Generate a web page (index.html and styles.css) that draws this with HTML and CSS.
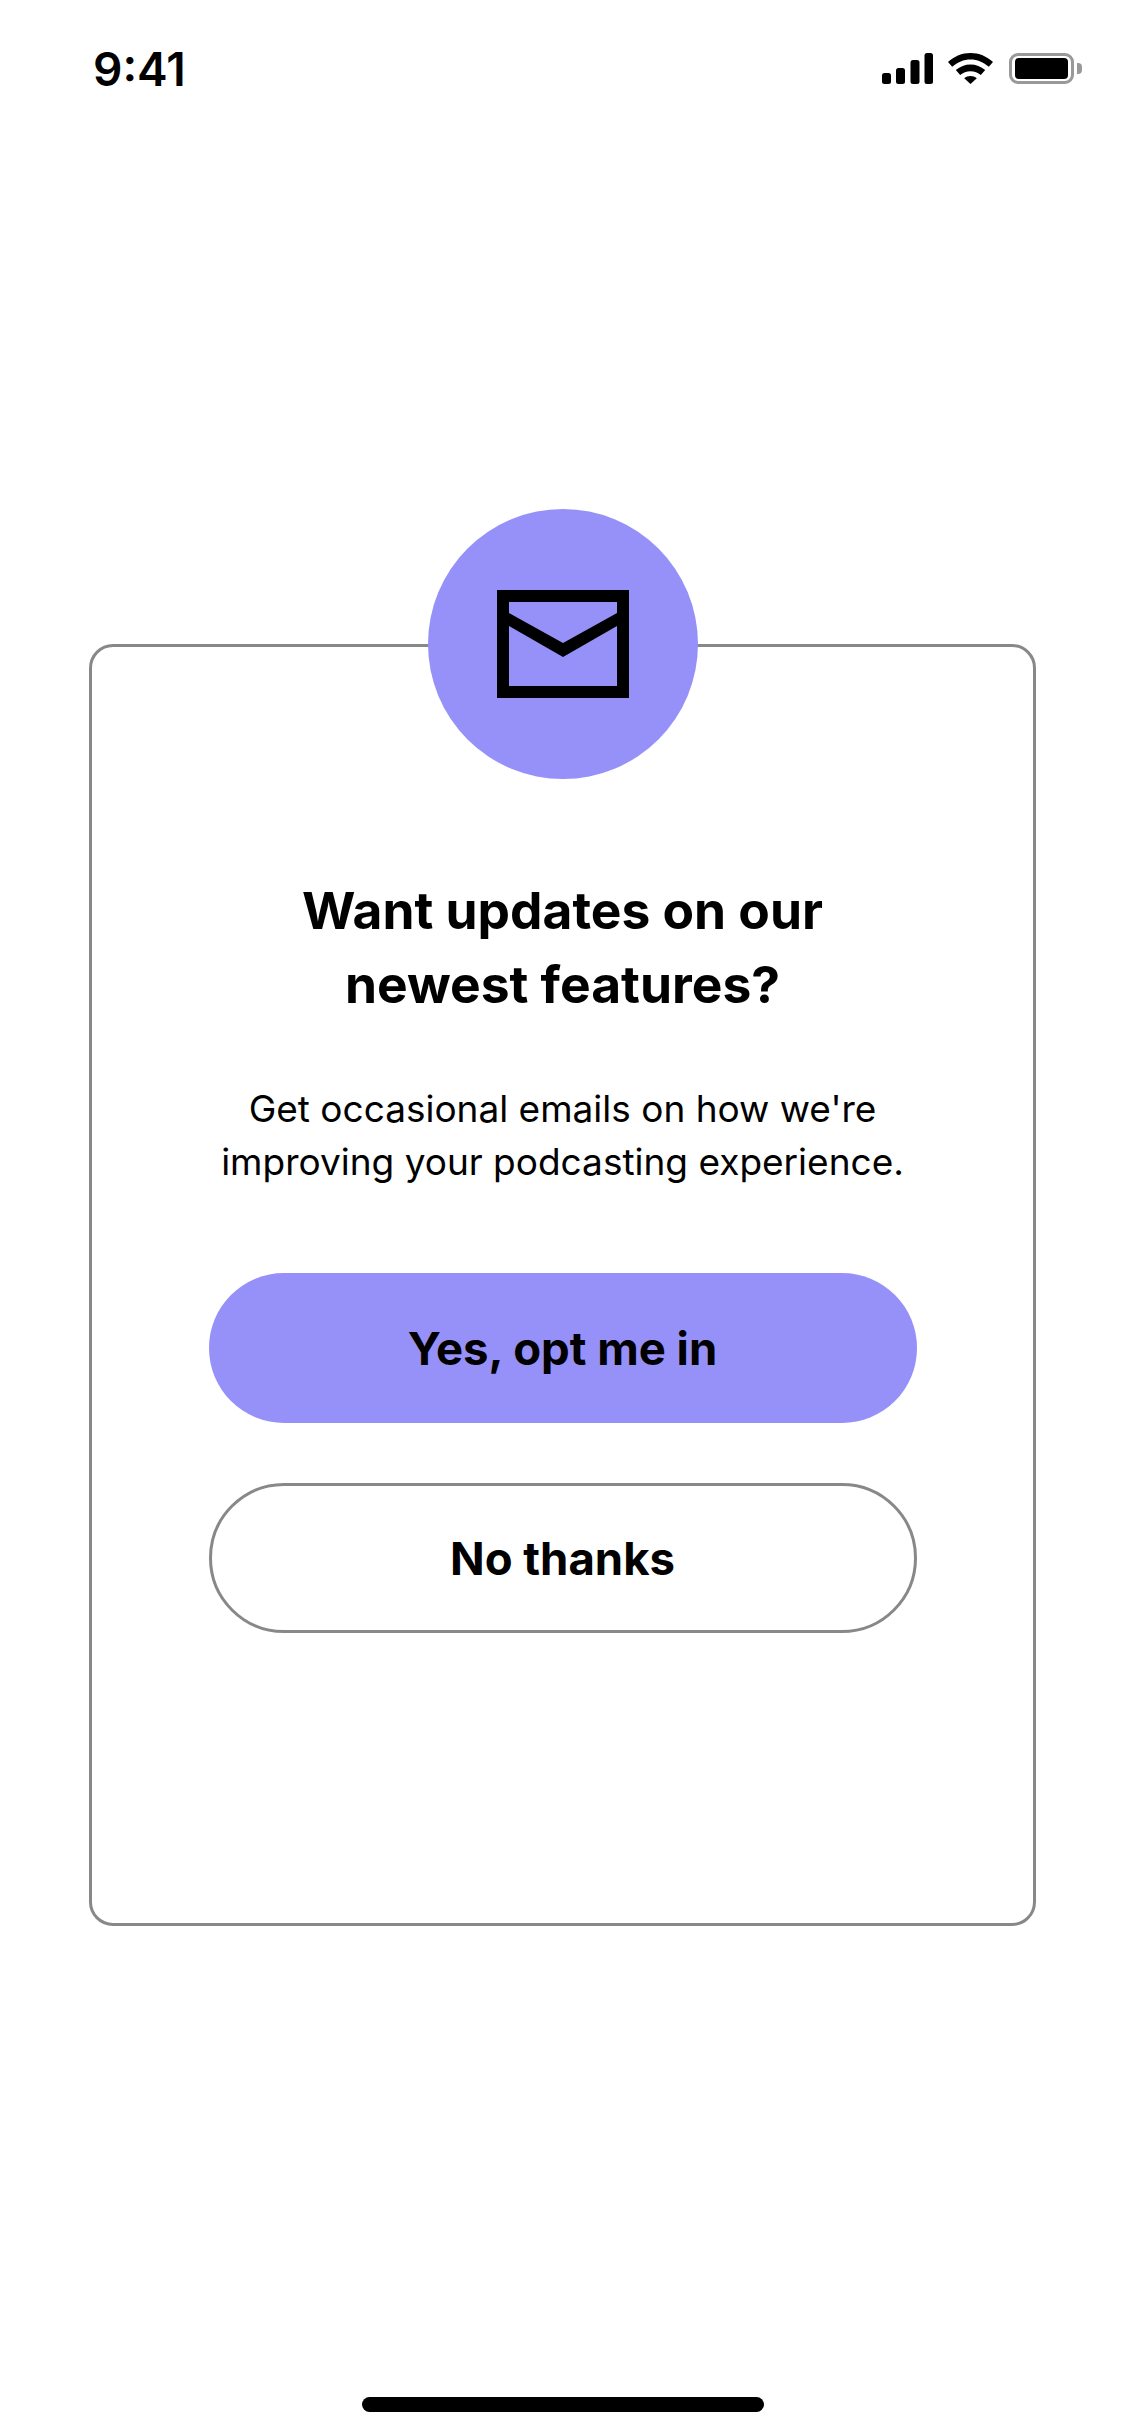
FILE: index.html
```html
<!DOCTYPE html>
<html lang="en">
<head>
<meta charset="UTF-8">
<title>Email opt in</title>
<meta name="viewport" content="width=device-width, initial-scale=1">
<link rel="stylesheet" href="styles.css">
</head>

<body>
<div class="screen">
  <div class="status-bar">
    <span class="time">9:41</span>
    <div class="status-icons">
      <svg class="signal" viewBox="0 0 51 31">
        <rect x="0" y="20" width="9" height="11" rx="2.5"/>
        <rect x="14" y="15" width="9" height="16" rx="2.5"/>
        <rect x="28.500" y="7" width="9" height="24" rx="2.500"/>
        <rect x="42.500" y="0" width="8.500" height="31" rx="2.500"/>
      </svg>
      <svg class="wifi" viewBox="0 0 45 31">
        <path d="M22.500 0C14 0 6.300 3.300 0 9l4.200 4.800C9.500 9.200 15.700 6.500 22.500 6.500s13 2.700 18.300 7.300L45 9C38.700 3.300 31 0 22.500 0z"/>
        <path d="M22.500 11.500c-5.500 0-10.400 2-14.700 5.500l4.400 5c2.800-2.300 6.300-3.700 10.300-3.700s7.500 1.400 10.300 3.700l4.400-5c-4.300-3.500-9.200-5.500-14.700-5.500z"/>
        <path d="M22.500 23c-2.300 0-4.600.8-6.300 2.200l6.300 5.800 6.300-5.800c-1.700-1.400-4-2.200-6.300-2.200z"/>
      </svg>
      <div class="battery">
        <div class="battery-body"><div class="battery-level"></div></div>
        <div class="battery-cap"></div>
      </div>
    </div>
  </div>

  <div class="card">
    <div class="icon-circle">
      <svg class="mail-icon" viewBox="0 0 132 108">
        <path d="M6 6h120v96H6z" fill="none" stroke="#000" stroke-width="12"/>
        <path d="M12 23l54 30 54-30v13l-54 31-54-31z"/>
      </svg>
    </div>
    <h1>Want updates on our<br>newest features?</h1>
    <p>Get occasional emails on how we're<br>improving your podcasting experience.</p>
    <button class="btn btn-yes">Yes, opt me in</button>
    <button class="btn btn-no">No thanks</button>
  </div>

  <div class="home-bar"></div>
</div>
</body>
</html>
```

FILE: styles.css
```css
* {
  box-sizing: border-box;
}

body {
  margin: 0;
  background: #fff;
  color: #000;
  font-family: Inter, "Liberation Sans", sans-serif;
}

.screen {
  width: 1125px;
  height: 2436px;
  display: flex;
  flex-direction: column;
  align-items: center;
  overflow: hidden;
}

.status-bar {
  width: 100%;
  height: 132px;
  display: flex;
  justify-content: space-between;
  align-items: flex-start;
  padding: 45px 43px 0 93px;
}
.time {
  font-size: 46px;
  line-height: 48px;
  font-weight: 600;
}
.status-icons {
  display: flex;
  align-items: center;
  gap: 15px;
  margin-top: 8px;
}
.signal {
  width: 51px;
  height: 31px;
}
.wifi {
  width: 45px;
  height: 31px;
}
.battery {
  display: flex;
  align-items: center;
  gap: 3px;
  margin-left: 1px;
}
.battery-body {
  width: 65px;
  height: 31px;
  border: 3px solid #999;
  border-radius: 9px;
  padding: 2px 3px;
}
.battery-level {
  height: 100%;
  background: #000;
  border-radius: 4px;
}
.battery-cap {
  width: 5px;
  height: 11px;
  background: #999;
  border-radius: 0 4px 4px 0;
}

.card {
  width: 947px;
  height: 1282px;
  margin-top: 512px;
  border: 3px solid #888;
  border-radius: 24px;
  display: flex;
  flex-direction: column;
  align-items: center;
  text-align: center;
}

.icon-circle {
  width: 270px;
  height: 270px;
  margin-top: -138px;
  border-radius: 50%;
  background: #9691f9;
  display: flex;
  align-items: center;
  justify-content: center;
  flex-shrink: 0;
}
.mail-icon {
  width: 132px;
  height: 108px;
}

h1 {
  margin: 94px 0 0;
  font-size: 51.5px;
  line-height: 74px;
  font-weight: 700;
}

p {
  margin: 61px 0 0;
  font-size: 37px;
  line-height: 53px;
  font-weight: 400;
}

.btn {
  width: 708px;
  height: 150px;
  border-radius: 75px;
  font-family: inherit;
  font-size: 45.5px;
  font-weight: 700;
  color: #000;
  flex-shrink: 0;
}
.btn-yes {
  margin-top: 85px;
  border: none;
  background: #9691f9;
}
.btn-no {
  margin-top: 60px;
  border: 3px solid #888;
  background: #fff;
}

.home-bar {
  width: 402px;
  height: 15px;
  margin-top: 471px;
  border-radius: 8px;
  background: #000;
}
```
